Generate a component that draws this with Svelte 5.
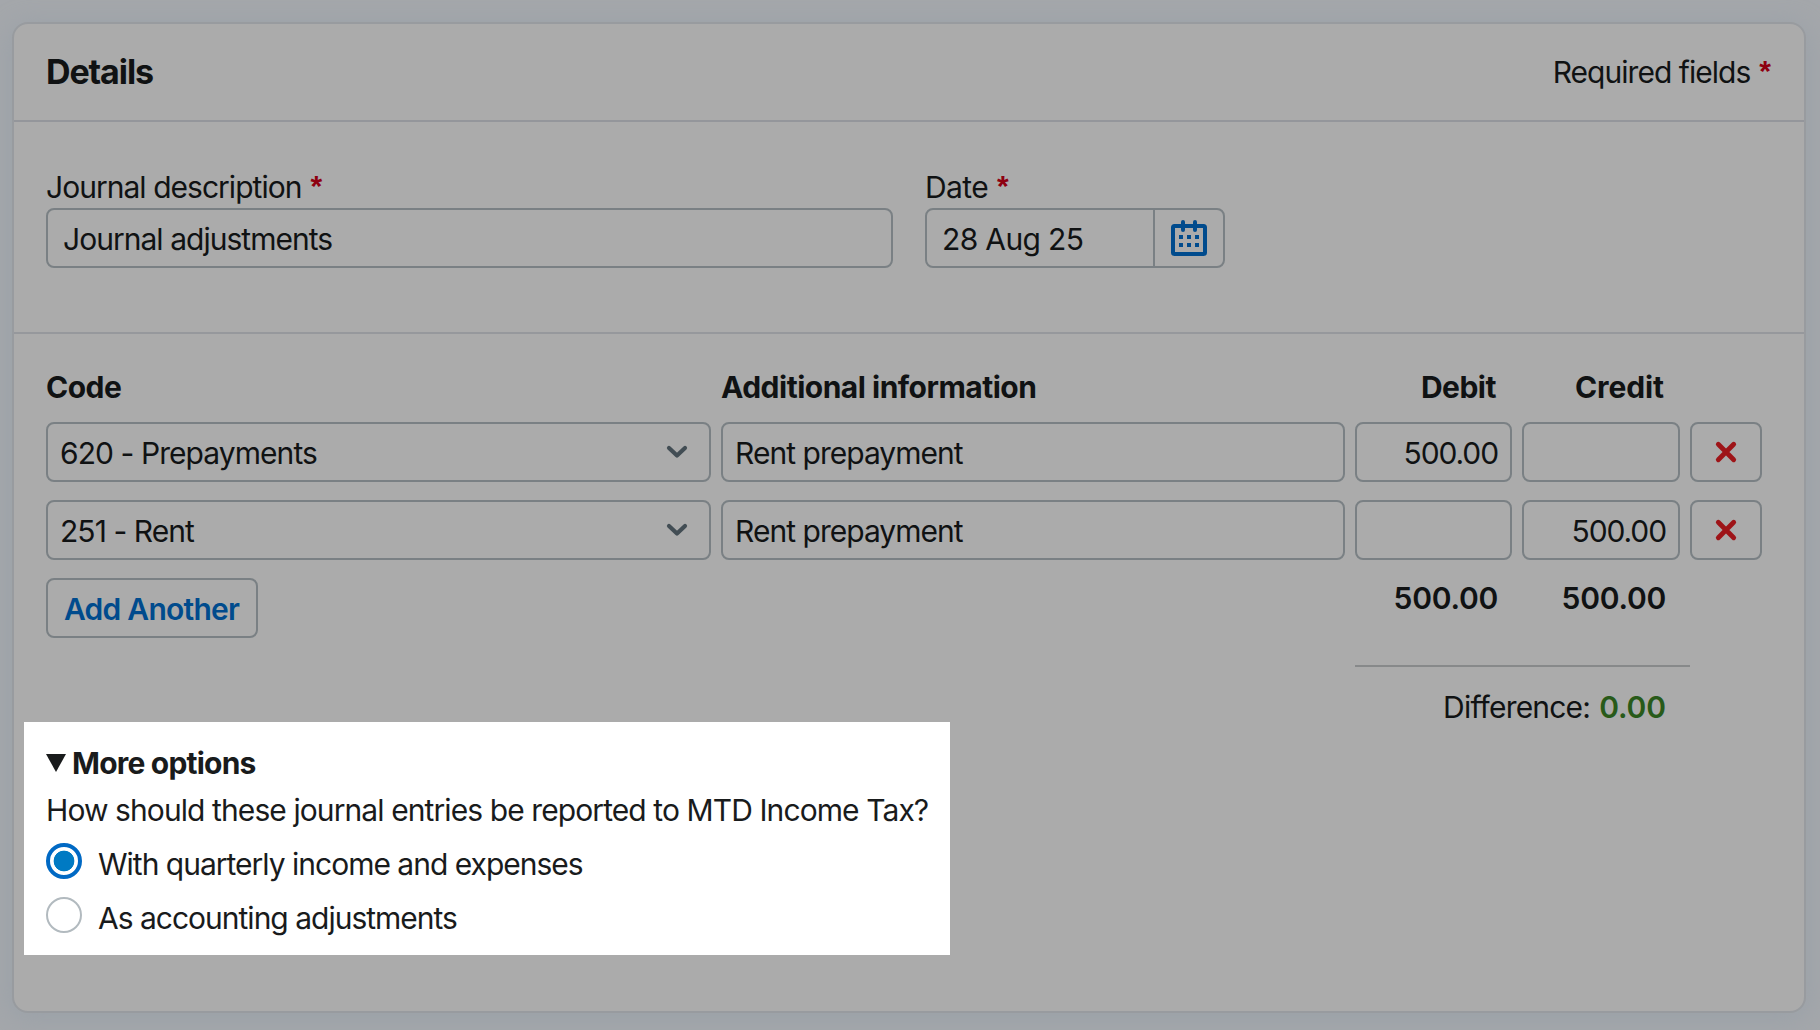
<script>
  const rows = [
    { code: '620 - Prepayments', info: 'Rent prepayment', debit: '500.00', credit: '' },
    { code: '251 - Rent', info: 'Rent prepayment', debit: '', credit: '500.00' },
  ];
  let choice = $state('quarterly');
</script>

<main>
  <section class="card">
    <header>
      <h1>Details</h1>
      <p class="required"><span>Required fields</span><b class="star">*</b></p>
    </header>

    <div class="fields">
      <div class="field desc">
        <label for="desc"><span>Journal description</span><b class="star">*</b></label>
        <input id="desc" class="box" value="Journal adjustments" />
      </div>
      <div class="field date">
        <label for="date"><span class="t-date">Date</span><b class="star">*</b></label>
        <div class="box group">
          <input id="date" value="28 Aug 25" />
          <button class="cal" aria-label="Open calendar">
            <svg width="36" height="36" viewBox="0 0 36 36">
              <rect x="2" y="6" width="32" height="28" rx="1.5" fill="none" stroke="currentColor" stroke-width="4" />
              <path d="M12 2v8M24 2v8" stroke="currentColor" stroke-width="4" stroke-linecap="round" />
              <path d="M8 17h4M16 17h4M24 17h4M8 25h4M16 25h4M24 25h4" stroke="currentColor" stroke-width="4" />
            </svg>
          </button>
        </div>
      </div>
    </div>

    <div class="entries">
      <div class="row head">
        <span>Code</span>
        <span>Additional information</span>
        <span class="num">Debit</span>
        <span class="num credit">Credit</span>
      </div>
      {#each rows as row}
        <div class="row line">
          <div class="box select">
            <span>{row.code}</span>
            <svg width="24" height="16" viewBox="0 0 24 16">
              <path d="M4 4l8 7.5L20 4" fill="none" stroke="currentColor" stroke-width="4.2" stroke-linecap="round" stroke-linejoin="round" />
            </svg>
          </div>
          <input class="box info" value={row.info} aria-label="Additional information" />
          <input class="box amount" value={row.debit} aria-label="Debit" />
          <input class="box amount" value={row.credit} aria-label="Credit" />
          <button class="box remove" aria-label="Remove line">
            <svg width="24" height="24" viewBox="0 0 24 24">
              <path d="M4.3 4.3l15.4 15.4M19.7 4.3L4.3 19.7" stroke="currentColor" stroke-width="4.8" stroke-linecap="round" />
            </svg>
          </button>
        </div>
      {/each}
      <div class="row foot">
        <button class="box add">Add Another</button>
        <span></span>
        <strong class="total">500.00</strong>
        <strong class="total">500.00</strong>
      </div>
      <div class="difference">
        <span>Difference:</span><strong>0.00</strong>
      </div>
    </div>

    <div class="options">
      <h2>
        <svg width="20" height="18" viewBox="0 0 20 18"><path d="M0 0h20L10 18z" fill="currentColor" /></svg>
        <span>More options</span>
      </h2>
      <p class="question">How should these journal entries be reported to MTD Income Tax?</p>
      <label class="radio">
        <input type="radio" value="quarterly" bind:group={choice} /><span>With quarterly income and expenses</span>
      </label>
      <label class="radio">
        <input type="radio" value="adjustments" bind:group={choice} /><span>As accounting adjustments</span>
      </label>
    </div>
  </section>
</main>

<style>
  :global(body) {
    background: #a4a7ab;
  }
  main {
    box-sizing: border-box;
    width: 1820px;
    height: 1030px;
    padding: 22px 14px 17px 12px;
    overflow: hidden;
    font: 400 30px/36px Inter, 'Liberation Sans', sans-serif;
    letter-spacing: -0.97px;
    color: #101213;
  }
  .card {
    box-sizing: border-box;
    height: 991px;
    background: #ababab;
    border: 2px solid #989b9f;
    border-radius: 16px;
    box-shadow: 0 4px 26px 2px #9aa1a8;
    display: flex;
    flex-direction: column;
  }
  h1, h2, p {
    margin: 0;
  }
  span, strong, p {
    white-space: nowrap;
  }
  input, button {
    box-sizing: border-box;
    margin: 0;
    border: 0;
    padding: 0;
    background: none;
    color: inherit;
    font: inherit;
    letter-spacing: inherit;
    outline: none;
    min-width: 0;
  }
  header {
    height: 96px;
    border-bottom: 2px solid #94969b;
    padding: 0 33px 0 32px;
    display: flex;
    align-items: center;
    justify-content: space-between;
  }
  h1 {
    font-size: 34px;
    line-height: 40px;
    font-weight: 700;
    letter-spacing: -1.1px;
  }
  .required, label {
    display: flex;
  }
  .star {
    color: #8e0010;
    font-family: 'Liberation Sans', Arial, sans-serif;
    line-height: 34px;
    letter-spacing: 0;
    margin-left: 9px;
  }
  .fields {
    box-sizing: border-box;
    height: 212px;
    padding: 47px 32px 0;
    border-bottom: 2px solid #96989c;
    display: flex;
    gap: 32px;
  }
  .field {
    display: flex;
    flex-direction: column;
    gap: 3px;
  }
  .desc {
    width: 847px;
  }
  .date {
    width: 300px;
  }
  .t-date {
    letter-spacing: -0.6px;
  }
  .box {
    box-sizing: border-box;
    height: 60px;
    border: 2px solid #7a8084;
    border-radius: 8px;
  }
  .field .box {
    padding-left: 15px;
  }
  .desc .box,
  .group input {
    padding-top: 1px;
  }
  .group {
    display: flex;
  }
  .group input {
    flex: 1;
    letter-spacing: -0.65px;
  }
  .cal {
    width: 70px;
    border-left: 2px solid #7a8084;
    color: #004b8d;
    display: flex;
    align-items: center;
    justify-content: center;
  }
  .entries {
    box-sizing: border-box;
    height: 388px;
    padding: 35px 42px 0 32px;
  }
  .row {
    display: grid;
    grid-template-columns: 665px 624px 157px 158px 72px;
    column-gap: 10px;
  }
  .head {
    font-weight: 700;
    height: 53px;
    letter-spacing: -0.5px;
  }
  .num {
    text-align: right;
    padding-right: 16px;
  }
  .credit {
    letter-spacing: -0.1px;
  }
  .line {
    margin-bottom: 18px;
  }
  .select {
    display: flex;
    align-items: center;
    justify-content: space-between;
    padding: 2px 20px 0 12px;
    letter-spacing: -0.93px;
  }
  .select svg {
    color: #424d54;
    margin-top: -2px;
  }
  .info {
    padding: 2px 12px 0;
  }
  .amount {
    text-align: right;
    padding: 2px 12px 0;
    letter-spacing: -1.1px;
  }
  .remove {
    display: flex;
    align-items: center;
    justify-content: center;
    color: #9e1418;
  }
  .add {
    width: 212px;
    color: #004b8d;
    font-weight: 600;
    padding: 1px 0 0 16px;
    text-align: left;
    letter-spacing: -0.75px;
  }
  .total {
    text-align: right;
    padding: 2px 14px 0 0;
    font-weight: 600;
    letter-spacing: -0.25px;
  }
  .difference {
    box-sizing: border-box;
    width: 335px;
    margin: 27px 72px 0 auto;
    border-top: 2px solid #87898a;
    padding: 22px 24px 0 0;
    display: flex;
    justify-content: flex-end;
    gap: 9px;
    letter-spacing: -0.8px;
  }
  .difference strong {
    color: #285a19;
    font-weight: 600;
    letter-spacing: -0.1px;
  }
  .options {
    box-sizing: border-box;
    width: 926px;
    height: 233px;
    margin-left: 10px;
    padding: 23px 22px 0;
    background: #fff;
    color: #191b1c;
  }
  h2 {
    font-size: 30px;
    line-height: 36px;
    font-weight: 700;
    letter-spacing: -0.8px;
    display: flex;
    align-items: center;
    gap: 6px;
  }
  .question {
    margin: 11px 0 6px;
    letter-spacing: -0.91px;
  }
  .radio {
    height: 54px;
    align-items: center;
    gap: 16px;
    letter-spacing: -1px;
  }
  .radio span {
    padding-top: 5px;
  }
  .radio input {
    appearance: none;
    width: 36px;
    height: 36px;
    border-radius: 50%;
    border: 2px solid #b2babf;
  }
  .radio input:checked {
    border: 4px solid #0069c4;
    background: radial-gradient(circle, #007ac3 10px, #fff 10.7px);
  }
</style>
